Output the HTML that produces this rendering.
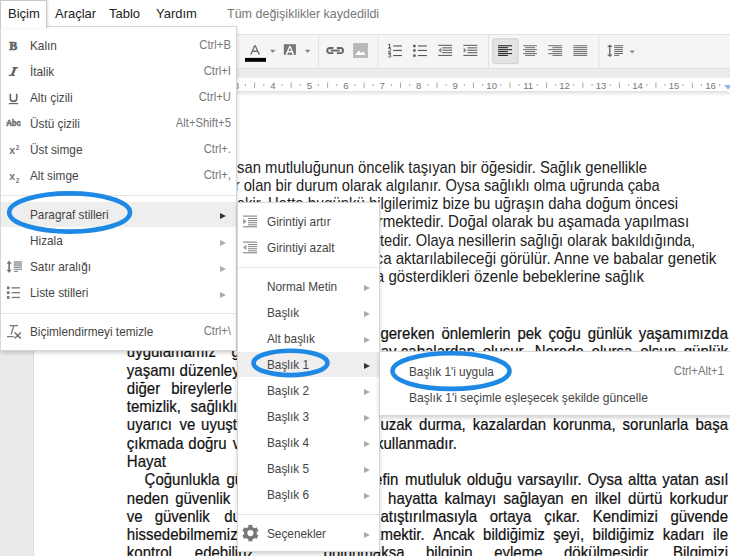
<!DOCTYPE html>
<html><head><meta charset="utf-8">
<style>
*{margin:0;padding:0;box-sizing:border-box}
html,body{width:730px;height:556px;overflow:hidden;background:#fff;font-family:"Liberation Sans",sans-serif}
.abs{position:absolute}
#menubar{position:absolute;left:0;top:0;width:730px;height:34px;background:#fff}
.mb{position:absolute;top:-0.7px;font-size:13px;color:#222;line-height:30px;white-space:nowrap}
#toolbar{position:absolute;left:0;top:34px;width:730px;height:35px;background:#f5f5f5;border-top:1px solid #e3e3e3;border-bottom:1px solid #e0e0e0}
#band{position:absolute;left:0;top:69px;width:730px;height:9px;background:#ebebeb}
#ruler{position:absolute;left:0;top:78px;width:728px;height:14px;background:#fff;border-bottom:1px solid #e3e3e3}
#docbg{position:absolute;left:0;top:92px;width:730px;height:464px;background:#ebebeb}
#page{position:absolute;left:33px;top:93px;width:700px;height:470px;background:#fff;border-left:1px solid #dcdcdc}
.t1{position:absolute;font-size:15px;color:#111;white-space:nowrap;line-height:18px}
.u{color:#222;font-size:15px !important;transform:scale(0.987,1.08);transform-origin:100% 14.2px}
.lo{transform:scaleY(1.06);transform-origin:0 14.2px;-webkit-text-stroke:0.2px #111}
.t2{position:absolute;font-size:15px;color:#111;white-space:nowrap;line-height:18px;text-align:justify;text-align-last:justify}
.menu{position:absolute;background:#fff;border:1px solid #d6d6d6;box-shadow:0 2px 4px rgba(0,0,0,.18)}
.mi{position:absolute;left:0;right:0;height:26px;line-height:26px;font-size:11.8px;color:#444;white-space:nowrap}
.mi .l{position:absolute;left:29px;transform:scaleY(1.1);transform-origin:0 17px}
.mi .k{position:absolute;right:5px;top:-0.8px;font-size:11.3px;color:#777;transform:scaleY(1.1);transform-origin:0 17px}
.arr{position:absolute;width:0;height:0;border-top:3px solid transparent;border-bottom:3px solid transparent;border-left:6px solid #aaa;margin-top:-0.5px}
.sep{position:absolute;left:0;right:0;height:1px;background:#e5e5e5}
.hl{background:#eee}
.ico{position:absolute;color:#666}
.tbi{position:absolute}
.rn{position:absolute;top:80px;font-size:9px;color:#777;line-height:10px}
.rt{position:absolute;background:#aaa;width:1px}
</style></head><body>
<div id="menubar">
  <div class="mb" style="left:8px">Biçim</div>
  <div class="mb" style="left:55px">Araçlar</div>
  <div class="mb" style="left:109px">Tablo</div>
  <div class="mb" style="left:156px">Yardım</div>
  <div class="mb" style="left:227px;color:#777;font-size:12.5px">Tüm değişiklikler kaydedildi</div>
</div>
<div id="toolbar"></div>
<div id="band"></div>
<div id="ruler"></div>
<div id="docbg"></div>
<div id="page"></div>
<div class="abs" style="left:34px;top:92px;width:700px;height:4px;background:linear-gradient(#e6e6e6,#fff)"></div>
<!--TOOLBAR-->
<svg class="abs" style="left:0;top:0" width="730" height="100" viewBox="0 0 730 100">
<!-- separators -->
<g fill="#e3e3e3">
<rect x="318" y="35" width="1" height="34"/>
<rect x="377.5" y="35" width="1" height="34"/>
<rect x="488" y="35" width="1" height="34"/>
<rect x="598.5" y="35" width="1" height="34"/>
</g>
<!-- text color -->
<path d="M250 54.6 L254.2 45.3 H255.8 L260 54.6 H258.4 L257.3 52 H252.7 L251.6 54.6 Z M253.3 50.6 H256.7 L255 46.8 Z" fill="#707070"/>
<rect x="245" y="57.9" width="21" height="3.9" fill="#000"/>
<path d="M270 49.8 H275.6 L272.8 53 Z" fill="#888"/>
<!-- highlight color -->
<rect x="283.8" y="44.2" width="12.1" height="10.6" fill="#777"/>
<path d="M285.6 54.8 L289.2 46 H290.6 L294.2 54.8 H292.6 L291.7 52.4 H288.1 L287.2 54.8 Z M288.6 51 H291.2 L289.9 47.6 Z" fill="#fff"/>
<path d="M304.8 49.8 H310.4 L307.6 53 Z" fill="#888"/>
<!-- link -->
<g fill="none" stroke="#666" stroke-width="1.9">
<path d="M333.4 48 H329.8 A2.55 2.55 0 0 0 329.8 53.1 H333.4"/>
<path d="M336.9 48 H340.5 A2.55 2.55 0 0 1 340.5 53.1 H336.9"/>
<path d="M330.6 50.55 H339.7"/>
</g>
<!-- image -->
<rect x="353.1" y="43.1" width="14.8" height="14.8" fill="#b8b8b8"/>
<path d="M355.2 55 L358.6 50.6 L361 53 L363 51.2 L365.8 55 Z" fill="#fff"/>
<!-- numbered list -->
<g fill="#555">
<rect x="393.2" y="45.4" width="8.7" height="1.1"/>
<rect x="393.2" y="49.9" width="8.7" height="1.1"/>
<rect x="393.2" y="55" width="8.7" height="1.1"/>
<path d="M388.3 44.6 L389.6 44 V47.6 M388.4 47.6 H390.8" stroke="#555" stroke-width="1" fill="none"/>
<path d="M388.2 49 Q388.6 48.4 389.6 48.4 Q390.8 48.4 390.8 49.4 Q390.8 50.2 388.3 52 H391" stroke="#555" stroke-width="1" fill="none"/>
<path d="M388.2 53.6 H390.8 L389.4 55.1 Q390.9 55.2 390.9 56.1 Q390.9 57.1 389.5 57.1 Q388.6 57.1 388.2 56.6" stroke="#555" stroke-width="1" fill="none"/>
</g>
<!-- bulleted list -->
<g fill="#555">
<rect x="413.2" y="44.8" width="2.4" height="2.4"/>
<rect x="413.2" y="49.3" width="2.4" height="2.4"/>
<rect x="413.2" y="54.4" width="2.4" height="2.4"/>
<rect x="417.9" y="45.4" width="9" height="1.1"/>
<rect x="417.9" y="49.9" width="9" height="1.1"/>
<rect x="417.9" y="55" width="9" height="1.1"/>
</g>
<!-- decrease indent -->
<g fill="#666">
<rect x="438.2" y="44.8" width="13.9" height="1.1"/>
<rect x="442.3" y="47.3" width="9.8" height="1.1"/>
<rect x="442.3" y="49.7" width="9.8" height="1.1"/>
<rect x="442.3" y="52.1" width="9.8" height="1.1"/>
<rect x="438.2" y="54.9" width="13.9" height="1.1"/>
<path d="M441.4 47.6 L438.4 50.3 L441.4 53 Z" fill="#888"/>
</g>
<!-- increase indent -->
<g fill="#666">
<rect x="463.4" y="44.8" width="13.9" height="1.1"/>
<rect x="467.5" y="47.3" width="9.8" height="1.1"/>
<rect x="467.5" y="49.7" width="9.8" height="1.1"/>
<rect x="467.5" y="52.1" width="9.8" height="1.1"/>
<rect x="463.4" y="54.9" width="13.9" height="1.1"/>
<path d="M463.6 47.6 L466.6 50.3 L463.6 53 Z" fill="#888"/>
</g>
<!-- pressed button -->
<rect x="492.8" y="38.8" width="25.4" height="24.8" rx="2" fill="#e3e3e3" stroke="#cfcfcf" stroke-width="1"/>
<g fill="#2a2a2a">
<rect x="498.1" y="45.2" width="13.9" height="1.1"/>
<rect x="498.1" y="47.1" width="9.8" height="1.1"/>
<rect x="498.1" y="49.1" width="13.9" height="1.1"/>
<rect x="498.1" y="51" width="9.8" height="1.1"/>
<rect x="498.1" y="53" width="13.9" height="1.1"/>
<rect x="498.1" y="54.9" width="9.8" height="1.1"/>
</g>
<g fill="#777">
<rect x="523.1" y="45.2" width="13.9" height="1.1"/>
<rect x="525.2" y="47.1" width="9.8" height="1.1"/>
<rect x="523.1" y="49.1" width="13.9" height="1.1"/>
<rect x="525.2" y="51" width="9.8" height="1.1"/>
<rect x="523.1" y="53" width="13.9" height="1.1"/>
<rect x="525.2" y="54.9" width="9.8" height="1.1"/>
<rect x="548.3" y="45.2" width="13.9" height="1.1"/>
<rect x="552.4" y="47.1" width="9.8" height="1.1"/>
<rect x="548.3" y="49.1" width="13.9" height="1.1"/>
<rect x="552.4" y="51" width="9.8" height="1.1"/>
<rect x="548.3" y="53" width="13.9" height="1.1"/>
<rect x="552.4" y="54.9" width="9.8" height="1.1"/>
<rect x="573.3" y="45.2" width="13.9" height="1.1"/>
<rect x="573.3" y="47.1" width="13.9" height="1.1"/>
<rect x="573.3" y="49.1" width="13.9" height="1.1"/>
<rect x="573.3" y="51" width="13.9" height="1.1"/>
<rect x="573.3" y="53" width="13.9" height="1.1"/>
<rect x="573.3" y="54.9" width="13.9" height="1.1"/>
</g>
<!-- line spacing -->
<g fill="#666">
<rect x="609.1" y="46" width="1.4" height="9.5"/>
<path d="M607 47 L609.8 44.4 L612.6 47 Z"/>
<path d="M607 54.4 L609.8 57 L612.6 54.4 Z"/>
<rect x="614.2" y="45.2" width="8.8" height="1"/>
<rect x="614.2" y="47.1" width="8.8" height="1"/>
<rect x="614.2" y="49.1" width="8.8" height="1"/>
<rect x="614.2" y="51" width="8.8" height="1"/>
<rect x="614.2" y="53" width="8.8" height="1"/>
<rect x="614.2" y="54.9" width="5" height="1"/>
<path d="M629.6 50.6 H634.8 L632.2 53.6 Z" fill="#888"/>
</g>
<!-- ruler -->
<text x="236.3" y="88.6" text-anchor="middle" font-family="Liberation Sans" font-size="9.6" fill="#777">3</text>
<rect x="245.0" y="84" width="1" height="2" fill="#aaa"/>
<rect x="254.1" y="82.3" width="1" height="6" fill="#aaa"/>
<rect x="263.3" y="84" width="1" height="2" fill="#aaa"/>
<text x="272.8" y="88.6" text-anchor="middle" font-family="Liberation Sans" font-size="9.6" fill="#777">4</text>
<rect x="281.4" y="84" width="1" height="2" fill="#aaa"/>
<rect x="290.6" y="82.3" width="1" height="6" fill="#aaa"/>
<rect x="299.8" y="84" width="1" height="2" fill="#aaa"/>
<text x="309.3" y="88.6" text-anchor="middle" font-family="Liberation Sans" font-size="9.6" fill="#777">5</text>
<rect x="317.9" y="84" width="1" height="2" fill="#aaa"/>
<rect x="327.1" y="82.3" width="1" height="6" fill="#aaa"/>
<rect x="336.2" y="84" width="1" height="2" fill="#aaa"/>
<text x="345.8" y="88.6" text-anchor="middle" font-family="Liberation Sans" font-size="9.6" fill="#777">6</text>
<rect x="354.4" y="84" width="1" height="2" fill="#aaa"/>
<rect x="363.6" y="82.3" width="1" height="6" fill="#aaa"/>
<rect x="372.7" y="84" width="1" height="2" fill="#aaa"/>
<text x="382.2" y="88.6" text-anchor="middle" font-family="Liberation Sans" font-size="9.6" fill="#777">7</text>
<rect x="390.9" y="84" width="1" height="2" fill="#aaa"/>
<rect x="400.0" y="82.3" width="1" height="6" fill="#aaa"/>
<rect x="409.2" y="84" width="1" height="2" fill="#aaa"/>
<text x="418.7" y="88.6" text-anchor="middle" font-family="Liberation Sans" font-size="9.6" fill="#777">8</text>
<rect x="427.4" y="84" width="1" height="2" fill="#aaa"/>
<rect x="436.5" y="82.3" width="1" height="6" fill="#aaa"/>
<rect x="445.7" y="84" width="1" height="2" fill="#aaa"/>
<text x="455.2" y="88.6" text-anchor="middle" font-family="Liberation Sans" font-size="9.6" fill="#777">9</text>
<rect x="463.8" y="84" width="1" height="2" fill="#aaa"/>
<rect x="473.0" y="82.3" width="1" height="6" fill="#aaa"/>
<rect x="482.1" y="84" width="1" height="2" fill="#aaa"/>
<text x="491.7" y="88.6" text-anchor="middle" font-family="Liberation Sans" font-size="9.6" fill="#777">10</text>
<rect x="500.3" y="84" width="1" height="2" fill="#aaa"/>
<rect x="509.5" y="82.3" width="1" height="6" fill="#aaa"/>
<rect x="518.6" y="84" width="1" height="2" fill="#aaa"/>
<text x="528.2" y="88.6" text-anchor="middle" font-family="Liberation Sans" font-size="9.6" fill="#777">11</text>
<rect x="536.8" y="84" width="1" height="2" fill="#aaa"/>
<rect x="546.0" y="82.3" width="1" height="6" fill="#aaa"/>
<rect x="555.1" y="84" width="1" height="2" fill="#aaa"/>
<text x="564.6" y="88.6" text-anchor="middle" font-family="Liberation Sans" font-size="9.6" fill="#777">12</text>
<rect x="573.3" y="84" width="1" height="2" fill="#aaa"/>
<rect x="582.4" y="82.3" width="1" height="6" fill="#aaa"/>
<rect x="591.6" y="84" width="1" height="2" fill="#aaa"/>
<text x="601.1" y="88.6" text-anchor="middle" font-family="Liberation Sans" font-size="9.6" fill="#777">13</text>
<rect x="609.8" y="84" width="1" height="2" fill="#aaa"/>
<rect x="618.9" y="82.3" width="1" height="6" fill="#aaa"/>
<rect x="628.1" y="84" width="1" height="2" fill="#aaa"/>
<text x="637.6" y="88.6" text-anchor="middle" font-family="Liberation Sans" font-size="9.6" fill="#777">14</text>
<rect x="646.2" y="84" width="1" height="2" fill="#aaa"/>
<rect x="655.4" y="82.3" width="1" height="6" fill="#aaa"/>
<rect x="664.5" y="84" width="1" height="2" fill="#aaa"/>
<text x="674.1" y="88.6" text-anchor="middle" font-family="Liberation Sans" font-size="9.6" fill="#777">15</text>
<rect x="682.7" y="84" width="1" height="2" fill="#aaa"/>
<rect x="691.9" y="82.3" width="1" height="6" fill="#aaa"/>
<rect x="701.0" y="84" width="1" height="2" fill="#aaa"/>
<text x="710.6" y="88.6" text-anchor="middle" font-family="Liberation Sans" font-size="9.6" fill="#777">16</text>
<rect x="719.2" y="84" width="1" height="2" fill="#aaa"/>
<path d="M724 85 H732 L728 89.7 Z" fill="#8fb6ee"/>
</svg>
<!--/TOOLBAR-->
<!--DOCTEXT-->
<div class="t1 u" style="right:82.6px;top:159.1px;transform:scale(0.987,1.08)">Sağlık, insan mutluluğunun öncelik taşıyan bir öğesidir. Sağlık genellikle</div>
<div class="t1 u" style="right:70.7px;top:177.2px;transform:scale(0.98,1.08)">hep var olan bir durum olarak algılanır. Oysa sağlıklı olma uğrunda çaba</div>
<div class="t1 u" style="right:52.4px;top:195.3px;transform:scale(0.991,1.08)">harcamak gerekir. Hatta bugünkü bilgilerimiz bize bu uğraşın daha doğum öncesi</div>
<div class="t1 u" style="right:41.0px;top:213.4px;transform:scale(1.007,1.08)">başlaması gerektiğini göstermektedir. Doğal olarak bu aşamada yapılması</div>
<div class="t1 u" style="right:34.7px;top:231.5px;transform:scale(0.977,1.08)">gerekenler anne ve babaya düşmektedir. Olaya nesillerin sağlığı olarak bakıldığında,</div>
<div class="t1 u" style="right:14.1px;top:249.6px;transform:scale(1.004,1.08)">sağlığın da nesilden nesile ayrıca aktarılabileceği görülür. Anne ve babalar genetik</div>
<div class="t1 u" style="right:86.4px;top:267.7px;transform:scale(1.0055,1.08)">yapılarının yanı sıra çocuklarına gösterdikleri özenle bebeklerine sağlık</div>
<div class="t2 lo" style="left:380.4px;width:347.6px;top:325.0px">gereken önlemlerin pek çoğu günlük yaşamımızda</div>
<div class="t2 lo" style="left:400.8px;width:327.2px;top:343.3px">çabalardan oluşur. Nerede olursa olsun günlük</div>
<div class="t2 lo" style="left:380.4px;width:347.6px;top:416.4px">uzak durma, kazalardan korunma, sorunlarla başa</div>
<div class="t1 lo" style="left:376.0px;top:434.7px">kullanmadır.</div>
<div class="t2 lo" style="left:405.1px;width:322.9px;top:471.2px">mutluluk olduğu varsayılır. Oysa altta yatan asıl</div>
<div class="t2 lo" style="left:388.1px;width:339.9px;top:489.5px">hayatta kalmayı sağlayan en ilkel dürtü korkudur</div>
<div class="t2 lo" style="left:380.4px;width:347.6px;top:507.8px">atıştırılmasıyla ortaya çıkar. Kendimizi güvende</div>
<div class="t2 lo" style="left:432.9px;width:295.1px;top:526.1px">Ancak bildiğimiz şeyi, bildiğimiz kadarı ile</div>
<div class="t2 lo" style="left:426.0px;width:302.0px;top:544.4px">bilginin eyleme dökülmesidir. Bilgimizi</div>
<div class="t1 lo" style="right:333.5px;top:343.3px">kolay</div>
<div class="t1 lo" style="right:331.7px;top:471.2px">hedefin</div>
<div class="t1 lo" style="right:305.4px;top:526.1px">gerekmektir.</div>
<div class="t1 lo" style="right:325.5px;top:544.4px">bulunmaksa</div>
<div class="t1 lo" style="left:126.8px;top:343.3px">uygulamamız</div>
<div class="t1 lo" style="left:231.5px;top:343.3px">gereken</div>
<div class="t1 lo" style="left:126.8px;top:361.6px">yaşamı</div>
<div class="t1 lo" style="left:179.6px;top:361.6px">düzenleyen</div>
<div class="t1 lo" style="left:126.8px;top:379.8px">diğer</div>
<div class="t1 lo" style="left:171.2px;top:379.8px">bireylerle</div>
<div class="t1 lo" style="left:126.8px;top:398.1px">temizlik,</div>
<div class="t1 lo" style="left:190.6px;top:398.1px">sağlıklı</div>
<div class="t1 lo" style="left:126.8px;top:416.4px">uyarıcı</div>
<div class="t1 lo" style="left:179.6px;top:416.4px">ve</div>
<div class="t1 lo" style="left:201.1px;top:416.4px">uyuşturucu</div>
<div class="t1 lo" style="left:126.8px;top:434.7px">çıkmada</div>
<div class="t1 lo" style="left:188.3px;top:434.7px">doğru</div>
<div class="t1 lo" style="left:232.7px;top:434.7px">ve</div>
<div class="t1 lo" style="left:126.8px;top:453.0px">Hayat</div>
<div class="t1 lo" style="left:144.6px;top:471.2px">Çoğunlukla</div>
<div class="t1 lo" style="left:226.5px;top:471.2px">güvenin</div>
<div class="t1 lo" style="left:126.8px;top:489.5px">neden</div>
<div class="t1 lo" style="left:175.2px;top:489.5px">güvenlik</div>
<div class="t1 lo" style="left:126.8px;top:507.8px">ve</div>
<div class="t1 lo" style="left:154.7px;top:507.8px">güvenlik</div>
<div class="t1 lo" style="left:224.2px;top:507.8px">duygusu</div>
<div class="t1 lo" style="left:126.8px;top:526.1px">hissedebilmemiz</div>
<div class="t1 lo" style="left:126.8px;top:544.4px">kontrol</div>
<div class="t1 lo" style="left:194.8px;top:544.4px">edebiliriz</div>
<!--/DOCTEXT-->

<!-- Biçim tab outline -->

<!-- Biçim menu -->
<div class="menu" style="left:0;top:26px;width:237px;height:325px">
  <div class="mi" style="top:7px"><span class="l" style="top:-1px">Kalın</span><span class="k" style="top:-1.8px">Ctrl+B</span></div>
  <div class="mi" style="top:33px"><span class="l" style="top:-1px">İtalik</span><span class="k" style="top:-1.8px">Ctrl+I</span></div>
  <div class="mi" style="top:59px"><span class="l" style="top:-1px">Altı çizili</span><span class="k" style="top:-1.8px">Ctrl+U</span></div>
  <div class="mi" style="top:85px"><span class="l" style="top:-1px">Üstü çizili</span><span class="k" style="top:-1.8px">Alt+Shift+5</span></div>
  <div class="mi" style="top:111px"><span class="l" style="top:-1px">Üst simge</span><span class="k" style="top:-1.8px">Ctrl+.</span></div>
  <div class="mi" style="top:137px"><span class="l" style="top:-1px">Alt simge</span><span class="k" style="top:-1.8px">Ctrl+,</span></div>
  <div class="sep" style="top:168px"></div>
  <div class="mi hl" style="top:175px;height:25px"><span class="l">Paragraf stilleri</span></div>
  <div class="arr" style="left:219px;top:186px;border-left-color:#333"></div>
  <div class="mi" style="top:201px"><span class="l">Hizala</span></div>
  <div class="arr" style="left:219px;top:213px"></div>
  <div class="mi" style="top:227px"><span class="l">Satır aralığı</span></div>
  <div class="arr" style="left:219px;top:239px"></div>
  <div class="mi" style="top:253px"><span class="l">Liste stilleri</span></div>
  <div class="arr" style="left:219px;top:265px"></div>
  <div class="sep" style="top:286px"></div>
  <div class="mi" style="top:292px"><span class="l">Biçimlendirmeyi temizle</span><span class="k">Ctrl+\</span></div>
  <!--ICONS1-->
</div>
<div class="abs" style="left:0;top:0;width:47px;height:28px;border:1px solid #c8c8c8;border-bottom:none;background:#fff;box-shadow:1px 0 2px rgba(0,0,0,.12)"><div style="position:absolute;left:7px;top:-1.7px;font-size:13px;color:#222;line-height:30px">Biçim</div></div>
<!--MENU2-->
<div class="menu" style="left:237px;top:202px;width:143px;height:350px">
  <div class="mi" style="top:7px"><span class="l" style="left:29px;top:-0.7px">Girintiyi artır</span></div>
  <div class="mi" style="top:33px"><span class="l" style="left:29px;top:-0.7px">Girintiyi azalt</span></div>
  <div class="sep" style="top:64px"></div>
  <div class="mi" style="top:71px"><span class="l" style="left:29px;top:0.3px">Normal Metin</span></div>
  <div class="arr" style="left:126px;top:82px"></div>
  <div class="mi" style="top:97px"><span class="l" style="left:29px;top:0.3px">Başlık</span></div>
  <div class="arr" style="left:126px;top:108px"></div>
  <div class="mi" style="top:123px"><span class="l" style="left:29px;top:0.3px">Alt başlık</span></div>
  <div class="arr" style="left:126px;top:134px"></div>
  <div class="mi hl" style="top:149px;height:25px"><span class="l" style="left:29px;top:0.3px">Başlık 1</span></div>
  <div class="arr" style="left:126px;top:160px;border-left-color:#333"></div>
  <div class="mi" style="top:175px"><span class="l" style="left:29px;top:0.3px">Başlık 2</span></div>
  <div class="arr" style="left:126px;top:186px"></div>
  <div class="mi" style="top:201px"><span class="l" style="left:29px;top:0.3px">Başlık 3</span></div>
  <div class="arr" style="left:126px;top:212px"></div>
  <div class="mi" style="top:227px"><span class="l" style="left:29px;top:0.3px">Başlık 4</span></div>
  <div class="arr" style="left:126px;top:238px"></div>
  <div class="mi" style="top:253px"><span class="l" style="left:29px;top:0.3px">Başlık 5</span></div>
  <div class="arr" style="left:126px;top:264px"></div>
  <div class="mi" style="top:279px"><span class="l" style="left:29px;top:0.3px">Başlık 6</span></div>
  <div class="arr" style="left:126px;top:290px"></div>
  <div class="sep" style="top:311px"></div>
  <div class="mi" style="top:318px"><span class="l" style="left:29px;top:0.3px">Seçenekler</span></div>
  <div class="arr" style="left:126px;top:329px"></div>
  <!--ICONS2-->
</div>
<!--/MENU2-->

<!--MENU3-->
<div class="menu" style="left:379px;top:351px;width:360px;height:65px;border-right:none">
  <div class="mi" style="top:6px"><span class="l" style="left:29px;top:1px">Başlık 1'i uygula</span><span class="k" style="right:15px;top:0.2px">Ctrl+Alt+1</span></div>
  <div class="mi" style="top:32px"><span class="l" style="left:29px;top:1px;font-size:12.1px">Başlık 1'i seçimle eşleşecek şekilde güncelle</span></div>
</div>
<!--/MENU3-->

<!--ICONOVERLAY-->
<svg class="abs" style="left:0;top:0" width="730" height="556" viewBox="0 0 730 556">
<g fill="#666">
<text x="9.2" y="49.9" font-family="Liberation Serif" font-weight="bold" font-size="12.8" fill="#666" stroke="#666" stroke-width="0.7" textLength="8" lengthAdjust="spacingAndGlyphs">B</text>
<path d="M12.6 67.1 H17.9 V68.4 H16.3 L13.6 74.8 H14.9 V76 H8.7 V74.8 H10.9 L13.6 68.4 H12.6 Z" fill="#666"/>
<path d="M10.3 93.7 V98.8 Q10.3 101.4 13.5 101.4 Q16.7 101.4 16.7 98.8 V93.7" fill="none" stroke="#666" stroke-width="1.6"/>
<rect x="8.8" y="103" width="9.4" height="1.2"/>
<text x="6.2" y="126.2" font-family="Liberation Sans" font-weight="bold" font-size="9" fill="#6a6a6a" stroke="#6a6a6a" stroke-width="0.35" textLength="14.7" lengthAdjust="spacingAndGlyphs">Abc</text>
<rect x="6" y="122.4" width="15" height="0.9" fill="#888"/>
<text x="9.2" y="153.5" font-family="Liberation Sans" font-weight="bold" font-size="10.6" fill="#777">x</text>
<text x="15.8" y="150" font-family="Liberation Sans" font-weight="bold" font-size="6.4" fill="#777">2</text>
<text x="9.2" y="179.6" font-family="Liberation Sans" font-weight="bold" font-size="10.6" fill="#777">x</text>
<text x="15.8" y="183.2" font-family="Liberation Sans" font-weight="bold" font-size="6.4" fill="#777">2</text>
</g>
<g fill="#777">
<rect x="8.3" y="262" width="1.7" height="9.5"/>
<path d="M6.6 263.8 L9.15 260.4 L11.7 263.8 Z"/>
<path d="M6.6 269.7 L9.15 273.1 L11.7 269.7 Z"/>
<rect x="13.8" y="261" width="8.2" height="5.4" fill="#b0b0b0"/>
<rect x="13.8" y="266.7" width="8.2" height="1.1" fill="#888"/>
<rect x="13.8" y="268.7" width="8.2" height="1.1" fill="#888"/>
<rect x="13.8" y="270.8" width="4.4" height="1.1" fill="#888"/>
<rect x="6.9" y="286.5" width="2.7" height="2.7"/>
<rect x="6.9" y="291.3" width="2.7" height="2.7"/>
<rect x="6.9" y="296.1" width="2.7" height="2.7"/>
<rect x="11.6" y="287.2" width="8.5" height="1.3"/>
<rect x="11.6" y="292" width="8.5" height="1.3"/>
<rect x="11.6" y="296.8" width="8.5" height="1.3"/>
<path d="M9.6 324.9 H18 V326.2 H14.2 L11.8 334.6 H10.5 L12.9 326.2 H9.6 Z"/>
<rect x="7" y="336" width="6.9" height="1.2"/>
<path d="M14.6 332.5 L20.8 338.3 M20.8 332.5 L14.6 338.3" stroke="#777" stroke-width="1.6" fill="none"/>
</g>
<!-- menu2 icons -->
<g fill="#777">
<rect x="243" y="215.6" width="14" height="1"/>
<rect x="248" y="218.1" width="9" height="0.9"/>
<rect x="248" y="220.2" width="9" height="0.9"/>
<rect x="248" y="222.3" width="9" height="0.9"/>
<rect x="248" y="224.4" width="9" height="0.9"/>
<rect x="243" y="226.3" width="14" height="1"/>
<path d="M243.2 218.6 L246.4 221.4 L243.2 224.2 Z" fill="#999"/>
<rect x="243" y="241.6" width="14" height="1"/>
<rect x="248" y="244.1" width="9" height="0.9"/>
<rect x="248" y="246.2" width="9" height="0.9"/>
<rect x="248" y="248.3" width="9" height="0.9"/>
<rect x="248" y="250.4" width="9" height="0.9"/>
<rect x="243" y="252.3" width="14" height="1"/>
<path d="M246.4 244.6 L243.2 247.4 L246.4 250.2 Z" fill="#999"/>
</g>
<g transform="translate(250.4 533.1)" fill="#777"><circle r="6.4"/><rect x="-2" y="-8.2" width="4" height="4" transform="rotate(0)"/><rect x="-2" y="-8.2" width="4" height="4" transform="rotate(60)"/><rect x="-2" y="-8.2" width="4" height="4" transform="rotate(120)"/><rect x="-2" y="-8.2" width="4" height="4" transform="rotate(180)"/><rect x="-2" y="-8.2" width="4" height="4" transform="rotate(240)"/><rect x="-2" y="-8.2" width="4" height="4" transform="rotate(300)"/><circle r="3.1" fill="#fff"/></g>
</svg>
<!--/ICONOVERLAY-->
<!--ELLIPSES-->
<svg class="abs" style="left:0;top:0" width="730" height="556" viewBox="0 0 730 556">
<g fill="none" stroke="#1e88e5" stroke-width="4.6">
<ellipse cx="69.6" cy="212.5" rx="60.4" ry="19.1"/>
<ellipse cx="290.5" cy="362.9" rx="36.95" ry="12.2"/>
<ellipse cx="451" cy="371.1" rx="58.5" ry="17.8"/>
</g></svg>
<!--/ELLIPSES-->
</body></html>
